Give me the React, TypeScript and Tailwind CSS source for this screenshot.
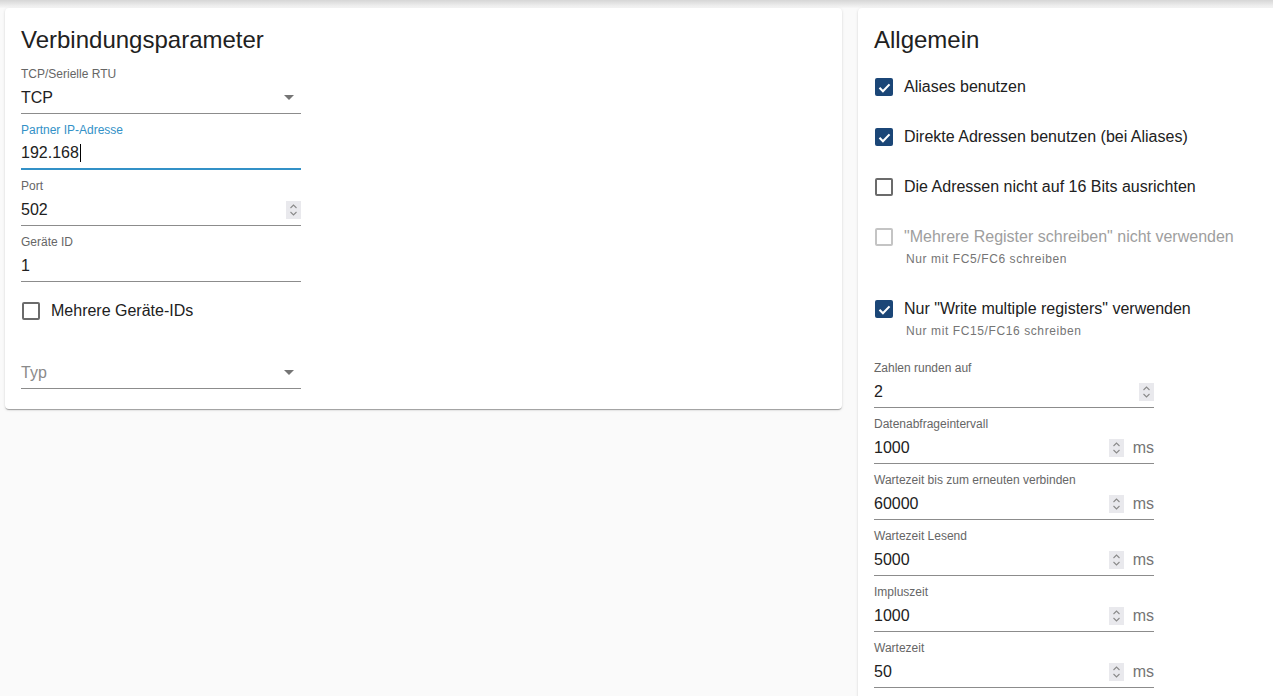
import React from "react";

const font = { fontFamily: '"Liberation Sans", Arial, sans-serif' };

function Spinner() {
    return (
        <div className="flex h-[18px] w-[15px] flex-col items-center justify-center bg-[#e9e9ed]">
            <svg width="9" height="14" viewBox="0 0 9 14" fill="none" stroke="#8a8a8a" strokeWidth="1.1">
                <path d="M1.5 5 L4.5 2 L7.5 5" />
                <path d="M1.5 9 L4.5 12 L7.5 9" />
            </svg>
        </div>
    );
}

function Arrow() {
    return (
        <svg width="10" height="5" viewBox="0 0 10 5" className="mr-[7px]">
            <path d="M0 0 L10 0 L5 5 Z" fill="#757575" />
        </svg>
    );
}

interface FieldProps {
    label: string;
    value: string;
    kind?: "text" | "number" | "select";
    unit?: string;
    focused?: boolean;
}

function Field({ label, value, kind = "text", unit, focused }: FieldProps) {
    return (
        <div className="mb-2 w-[280px]">
            <div className={"h-4 text-xs leading-4 " + (focused ? "text-[#3391c7]" : "text-[#666666]")}>{label}</div>
            <div
                className={
                    "flex h-[32px] items-center " +
                    (focused ? "border-b-2 border-[#3391c7]" : "border-b border-[#8c8c8c]")
                }
            >
                <div className="flex flex-1 items-center text-base leading-6 text-[#212121]">
                    {value}
                    {focused && <span className="ml-px inline-block h-[18px] w-px bg-black" />}
                </div>
                {kind === "number" && <Spinner />}
                {kind === "select" && <Arrow />}
                {unit && <span className="ml-[9px] text-base text-[#757575]">{unit}</span>}
            </div>
        </div>
    );
}

function Check({ checked, disabled }: { checked?: boolean; disabled?: boolean }) {
    if (checked) {
        return (
            <div className="ml-px flex h-[18px] w-[18px] items-center justify-center rounded-[2px] bg-[#1b4677]">
                <svg width="15" height="15" viewBox="0 0 24 24" fill="none" stroke="white" strokeWidth="3.4">
                    <path d="M4 12.5 L9.5 18 L20 7" />
                </svg>
            </div>
        );
    }
    return (
        <div
            className={
                "ml-px h-[18px] w-[18px] rounded-[2px] border-2 " +
                (disabled ? "border-[#c4c4c4]" : "border-[#6b6b6b]")
            }
        />
    );
}

function CheckRow({
    label,
    checked,
    disabled,
    helper,
}: {
    label: string;
    checked?: boolean;
    disabled?: boolean;
    helper?: string;
}) {
    return (
        <div className={helper ? "mb-[21px]" : "mb-2"}>
            <div className="flex h-[42px] items-center">
                <Check checked={checked} disabled={disabled} />
                <span className={"ml-[11px] text-base " + (disabled ? "text-[#9e9e9e]" : "text-[#212121]")}>
                    {label}
                </span>
            </div>
            {helper && (
                <div className="-mt-[7px] ml-[32px] text-xs leading-4 tracking-[0.6px] text-[#757575]">{helper}</div>
            )}
        </div>
    );
}

const cardClass =
    "w-[837px] shrink-0 rounded-[4px] bg-white p-4 shadow-[0_2px_1px_-1px_rgba(0,0,0,0.2),0_1px_1px_0_rgba(0,0,0,0.14),0_1px_3px_0_rgba(0,0,0,0.12)]";

export default function App() {
    return (
        <div className="relative h-[696px] w-screen overflow-hidden bg-[#fafafa]" style={font}>
            <div className="absolute inset-x-0 top-0 h-2 bg-gradient-to-b from-[#d6d6d6] to-[#f7f7f7]" />
            <div className="relative flex items-start gap-4 pl-[5px] pt-2">
                <div className={cardClass + " pb-[20px]"}>
                    <h2 className="h-8 text-2xl leading-8 text-[#212121]">Verbindungsparameter</h2>
                    <div className="mt-[10px]">
                        <Field label="TCP/Serielle RTU" value="TCP" kind="select" />
                        <Field label="Partner IP-Adresse" value="192.168" focused />
                        <Field label="Port" value="502" kind="number" />
                        <Field label="Geräte ID" value="1" />
                    </div>
                    <div className="mt-[1px] flex h-[42px] items-center">
                        <Check />
                        <span className="ml-[11px] text-base text-[#212121]">Mehrere Geräte-IDs</span>
                    </div>
                    <div className="mt-[25px] w-[280px]">
                        <div className="flex h-[32px] items-center border-b border-[#8c8c8c]">
                            <span className="flex-1 text-base text-[#8a8a8a]">Typ</span>
                            <Arrow />
                        </div>
                    </div>
                </div>
                <div className={cardClass + " min-h-[720px]"}>
                    <h2 className="h-8 text-2xl leading-8 text-[#212121]">Allgemein</h2>
                    <div className="mt-[10px]">
                        <CheckRow label="Aliases benutzen" checked />
                        <CheckRow label="Direkte Adressen benutzen (bei Aliases)" checked />
                        <CheckRow label="Die Adressen nicht auf 16 Bits ausrichten" />
                        <CheckRow
                            label={'"Mehrere Register schreiben" nicht verwenden'}
                            disabled
                            helper="Nur mit FC5/FC6 schreiben"
                        />
                        <CheckRow
                            label={'Nur "Write multiple registers" verwenden'}
                            checked
                            helper="Nur mit FC15/FC16 schreiben"
                        />
                    </div>
                    <Field label="Zahlen runden auf" value="2" kind="number" />
                    <Field label="Datenabfrageintervall" value="1000" kind="number" unit="ms" />
                    <Field label="Wartezeit bis zum erneuten verbinden" value="60000" kind="number" unit="ms" />
                    <Field label="Wartezeit Lesend" value="5000" kind="number" unit="ms" />
                    <Field label="Impluszeit" value="1000" kind="number" unit="ms" />
                    <Field label="Wartezeit" value="50" kind="number" unit="ms" />
                </div>
            </div>
        </div>
    );
}
